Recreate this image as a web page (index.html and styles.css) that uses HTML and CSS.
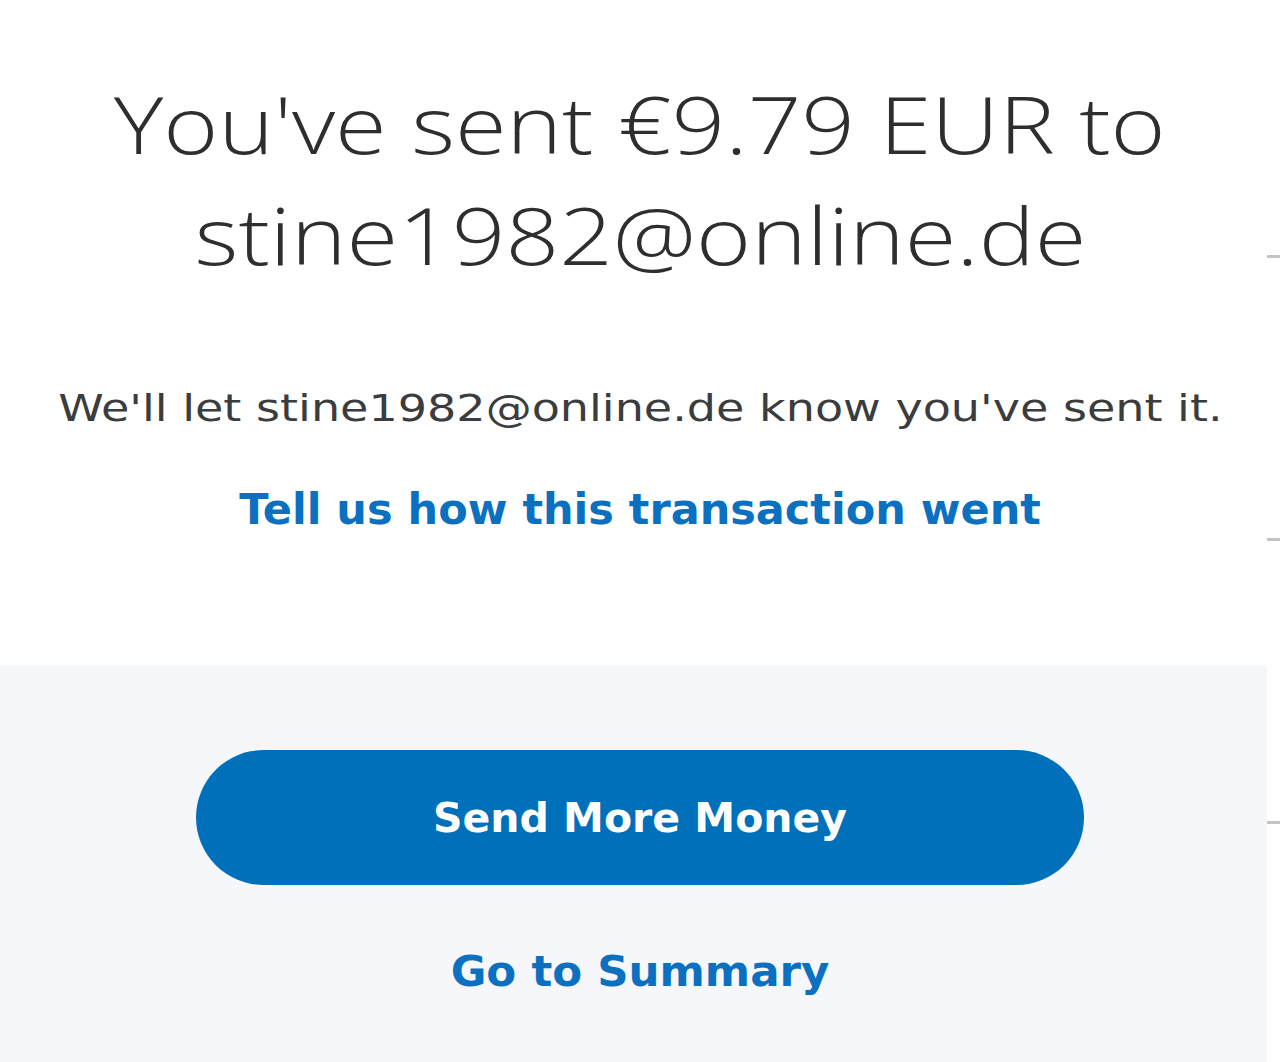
FILE: index.html
```html
<!DOCTYPE html>
<html lang="en">
<head>
<meta charset="utf-8">
<title>Payment sent</title>
<link rel="stylesheet" href="styles.css">
</head>
<body>
<div class="page">
  <main class="main">
    <section class="confirm">
      <h1 class="title">
        <span class="title-line">You've sent €9.79 EUR to</span>
        <span class="title-line">stine1982@online.de</span>
      </h1>
      <p class="note">We'll let stine1982@online.de know you've sent it.</p>
      <a class="feedback" href="#">Tell us how this transaction went</a>
    </section>
    <section class="actions">
      <a class="btn-primary" href="#">Send More Money</a>
      <a class="link-summary" href="#">Go to Summary</a>
    </section>
  </main>
  <aside class="rail">
    <i class="tick"></i>
    <i class="tick"></i>
    <i class="tick"></i>
  </aside>
</div>
</body>
</html>
```

FILE: styles.css
```css
html, body {
  margin: 0;
  padding: 0;
  background: #ffffff;
}

.page {
  display: flex;
  width: 1280px;
  height: 1062px;
  overflow: hidden;
}

.main {
  width: 1267px;
  display: flex;
  flex-direction: column;
}

.confirm {
  flex: 0 0 665px;
  box-sizing: border-box;
  padding: 67px 0 0 13px;
  display: flex;
  flex-direction: column;
  align-items: center;
}

.title {
  margin: 0;
  font-family: "Open Sans", "Liberation Sans", sans-serif;
  font-weight: 300;
  font-size: 80px;
  line-height: 111px;
  color: #2c2e2f;
  display: flex;
  flex-direction: column;
  align-items: center;
  white-space: nowrap;
}

.title-line {
  display: block;
  transform: scaleX(1.175);
}

.note {
  margin: 95px 0 0;
  font-family: "DejaVu Sans", "Liberation Sans", sans-serif;
  font-size: 38px;
  line-height: 48px;
  color: #3b3c3e;
  white-space: nowrap;
  transform: scaleX(1.212);
}

.feedback {
  margin-top: 52px;
  font-family: "DejaVu Sans", "Liberation Sans", sans-serif;
  font-weight: bold;
  font-size: 43px;
  line-height: 50px;
  color: #0a70bf;
  text-decoration: none;
  white-space: nowrap;
}

.actions {
  flex: 1;
  background: #f5f7fa;
  box-sizing: border-box;
  padding: 85px 0 0 13px;
  display: flex;
  flex-direction: column;
  align-items: center;
}

.btn-primary {
  width: 888px;
  height: 135px;
  border-radius: 999px;
  background: #0070ba;
  color: #ffffff;
  display: flex;
  align-items: center;
  justify-content: center;
  font-family: "DejaVu Sans", "Liberation Sans", sans-serif;
  font-weight: bold;
  font-size: 41px;
  text-decoration: none;
  white-space: nowrap;
}

.link-summary {
  margin-top: 61px;
  font-family: "DejaVu Sans", "Liberation Sans", sans-serif;
  font-weight: bold;
  font-size: 43.5px;
  line-height: 50px;
  color: #0a70bf;
  text-decoration: none;
  white-space: nowrap;
}

.rail {
  width: 13px;
  display: flex;
  flex-direction: column;
  padding-top: 255px;
  gap: 280px;
}

.tick {
  display: block;
  width: 13px;
  height: 3px;
  background: #c4c4c4;
}
```
